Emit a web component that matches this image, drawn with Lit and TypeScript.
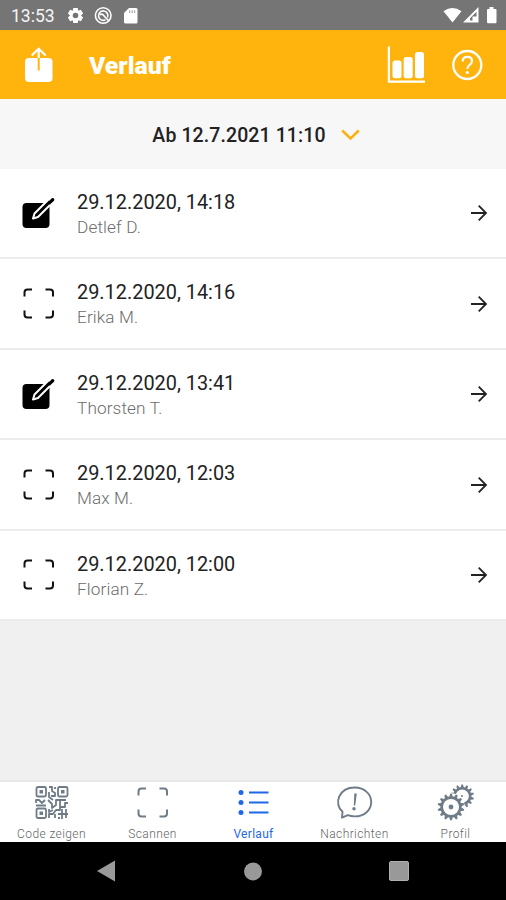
import { LitElement, html, css, svg } from "lit";
import { customElement, property } from "lit/decorators.js";

type Entry = { kind: "edit" | "scan"; date: string; name: string };

const entries: Entry[] = [
  { kind: "edit", date: "29.12.2020, 14:18", name: "Detlef D." },
  { kind: "scan", date: "29.12.2020, 14:16", name: "Erika M." },
  { kind: "edit", date: "29.12.2020, 13:41", name: "Thorsten T." },
  { kind: "scan", date: "29.12.2020, 12:03", name: "Max M." },
  { kind: "scan", date: "29.12.2020, 12:00", name: "Florian Z." },
];

/** Closed outline of a cog wheel with pointed, slightly blunted teeth. */
function cog(cx: number, cy: number, inner: number, outer: number, teeth: number): string {
  const step = (Math.PI * 2) / teeth;
  const pts: string[] = [];
  for (let i = 0; i < teeth; i++) {
    const a = i * step - Math.PI / 2;
    for (const [off, r] of [[-0.36, inner], [-0.14, outer], [0.14, outer], [0.36, inner]]) {
      const t = a + off * step;
      pts.push(`${(cx + r * Math.cos(t)).toFixed(2)} ${(cy + r * Math.sin(t)).toFixed(2)}`);
    }
  }
  return `M${pts.join("L")}Z`;
}

const scanFrame = svg`<path d="M5.500 12.500V8.500Q5.500 5.500 8.500 5.500H13M26.500 5.500H31Q34 5.500 34 8.500V12.500M34 26.500V30.500Q34 33.500 31 33.500H26.500M13 33.500H8.500Q5.500 33.500 5.500 30.500V26.500"
  fill="none" stroke="currentColor" stroke-width="2"/>`;

const icons: Record<string, unknown> = {
  edit: html`<svg width="40" height="40" viewBox="0 0 40 40">
    <rect x="3.500" y="10" width="27" height="25" rx="4" fill="#000"/>
    <path d="M14 25.500L15.500 20.500L30 6L33.500 9.500L19 24Z" fill="#000" stroke="#fff" stroke-width="2" stroke-linejoin="round"/>
    <path d="M29.800 8.200L32.800 5.300Q33.800 4.500 34.900 5.500Q35.900 6.700 35 7.700L32 10.600L30.500 12" fill="#000"/>
  </svg>`,
  scan: html`<svg width="40" height="40" viewBox="0 0 40 40">${scanFrame}</svg>`,
  qr: html`<svg width="40" height="40" viewBox="0 0 40 40">
    <g fill="none" stroke="currentColor" stroke-width="1.800" stroke-linejoin="round">
      <rect x="4.500" y="4" width="9.500" height="9.500" rx="1.500"/><rect x="26" y="4" width="9.500" height="9.500" rx="1.500"/><rect x="4.500" y="25.500" width="9.500" height="9.500" rx="1.500"/>
      <path d="M17 4H20V8L23 10V13H19M17 9V14L21 17M23 4V6M4 20V17H7L10 20L13 17M4 22.500H14M16 17L20 21V25L24 22V17H34M28 17V24H33V20H36M17 26V29L21 27M17 35V31H21L24 27H28V24M23 35V31M26 31H36M30 26V36M34 26V35M26 35H28"/>
    </g>
    <path d="M7.500 7H11V10.500H7.500ZM29 7H32.500V10.500H29ZM7.500 28.500H11V32H7.500Z" fill="currentColor"/>
  </svg>`,
  list: html`<svg width="40" height="40" viewBox="0 0 40 40">
    <g fill="currentColor"><circle cx="7" cy="9.600" r="2.500"/><circle cx="7" cy="19.500" r="2.500"/><circle cx="7" cy="29.400" r="2.500"/></g>
    <path d="M15 9.500H34.500M15 19.500H34.500M15 29.500H34.500" stroke="currentColor" stroke-width="2" fill="none"/>
  </svg>`,
  message: html`<svg width="40" height="40" viewBox="0 0 40 40">
    <path d="M7.500 28.800C-1.500 21 3.500 4.500 19.800 4.500C29.500 4.500 36.200 11.200 36.200 19C36.200 27 29.500 33.400 19.800 33.400Q15.800 33.400 12.800 32.200L7 34.700Z" fill="none" stroke="currentColor" stroke-width="1.900" stroke-linejoin="round"/>
    <path d="M19.300 10.500H21.800L20.200 22.500H18.800Z" fill="currentColor"/><circle cx="19" cy="25.700" r="1.700" fill="currentColor"/>
  </svg>`,
  gears: html`<svg width="40" height="40" viewBox="0 0 40 40">
    <path d="${cog(26.2, 13.2, 9.2, 11.8, 14)}" fill="currentColor"/><circle cx="26.200" cy="13.200" r="6.600" fill="#fff"/>
    <circle cx="15" cy="24" r="13.800" fill="#fff"/>
    <path d="${cog(15, 24, 10.7, 13.4, 14)}" fill="currentColor"/><circle cx="15" cy="24" r="8" fill="#fff"/>
    <circle cx="15" cy="24" r="2.400" fill="currentColor"/><circle cx="26" cy="13" r="1" fill="currentColor"/>
  </svg>`,
};

@customElement("history-row")
class HistoryRow extends LitElement {
  @property({ attribute: false }) entry!: Entry;
  static styles = css`
    :host { display: flex; align-items: center; box-sizing: border-box; height: 90.500px; padding: 1px 17px 0 19px; background: #fff; border-bottom: 2px solid #ececec; color: #111; }
    .kind { display: flex; width: 58px; flex: none; }
    .text { flex: 1; padding-top: 3px; }
    .date { font-size: 19.900px; line-height: 25px; white-space: nowrap; color: #222; }
    .name { font-size: 17.200px; font-weight: 300; line-height: 25px; color: #6c6c6c; letter-spacing: .12px; }
    svg { display: block; }
  `;
  render() {
    return html`
      <div class="kind">${icons[this.entry.kind]}</div>
      <div class="text"><div class="date">${this.entry.date}</div><div class="name">${this.entry.name}</div></div>
      <svg width="20" height="20" viewBox="0 0 20 20"><path d="M2 10H17M9.700 2.700L17 10L9.700 17.300" fill="none" stroke="#222" stroke-width="1.800"/></svg>`;
  }
}

@customElement("tab-item")
class TabItem extends LitElement {
  @property() icon = "";
  @property() label = "";
  static styles = css`
    :host { display: flex; flex-direction: column; align-items: center; flex: 1 1 0; color: #6f7c87; padding-top: 1px; }
    :host([active]) { color: #1f68e5; }
    svg { display: block; }
    .label { font-size: 12px; font-weight: 300; line-height: 16px; margin-top: 3px; color: #666; letter-spacing: .4px; white-space: nowrap; }
    :host([active]) .label { color: #1f68e5; font-weight: 400; letter-spacing: .3px; }
  `;
  render() {
    return html`${icons[this.icon]}<div class="label">${this.label}</div>`;
  }
}

@customElement("app-root")
class AppRoot extends LitElement {
  static styles = css`
    :host { display: flex; flex-direction: column; width: 506px; height: 900px; overflow: hidden; background: #f0f0f0; font-family: Roboto, "Liberation Sans", sans-serif; }
    svg { display: block; flex: none; }
    .status { display: flex; align-items: center; height: 30px; flex: none; box-sizing: border-box; padding: 1px 7px 0 11px; background: #757575; color: #f5f5f5; }
    .clock { font-size: 17.500px; line-height: 28px; width: 56px; }
    .grow { flex: 1; }
    .header { display: flex; align-items: center; height: 69px; flex: none; box-sizing: border-box; padding: 0 22px 0 19px; background: #ffb40d; color: #fff; }
    .title { margin: 3px 0 0 30px; font-size: 24.800px; font-weight: 900; line-height: 32px; flex: 1; }
    .help { margin-left: 24px; }
    .filter { display: flex; align-items: center; justify-content: center; height: 69.500px; flex: none; box-sizing: border-box; padding: 3px 0 0 6px; background: #f7f7f7; color: #222; font-size: 19.500px; font-weight: 500; letter-spacing: .1px; gap: 15px; }
    .list { flex: 1; }
    .tabs { display: flex; height: 62px; flex: none; box-sizing: border-box; padding-left: 1px; background: #fff; border-top: 2px solid #e9e9e9; }
    .system { display: flex; align-items: center; justify-content: space-between; height: 58px; flex: none; box-sizing: border-box; padding: 0 97px; background: #000; }
  `;
  render() {
    return html`
      <div class="status">
        <span class="clock">13:53</span>
        <svg width="76" height="20" viewBox="0 0 76 20">
          <path d="M6.300 1.900H10.700L11.300 4.700L13.900 3.800L16.100 7.500L14 9.500L16.100 11.500L13.900 15.200L11.300 14.300L10.700 17.100H6.300L5.700 14.300L3.100 15.200L.9 11.500L3 9.500L.9 7.500L3.100 3.800L5.700 4.700ZM8.500 6.700A2.800 2.800 0 1 0 8.500 12.300A2.800 2.800 0 1 0 8.500 6.700Z" fill="#fff" fill-rule="evenodd"/>
          <g fill="none" stroke="#fff" stroke-width="1.600"><circle cx="36.200" cy="9.500" r="7.800"/><path d="M38.500 13.700A4.700 4.700 0 1 1 40.500 11.500M33 9C35 7 36.500 9 38 11L42 15"/></g>
          <path d="M62 2H69Q70.500 2 70.500 3.500V16Q70.500 17.500 69 17.500H58.500Q57 17.500 57 16V7Z" fill="#fff"/>
          <path d="M62.700 4.300V7M65.200 4.300V7M67.700 4.300V7" stroke="#9a9a9a" stroke-width="1"/>
        </svg>
        <span class="grow"></span>
        <svg width="57" height="20" viewBox="0 0 57 20">
          <path d="M1.500 5.200Q10.500-1.400 19.500 5.200L10.500 16.500Z" fill="#fff"/>
          <path d="M36.500 1V16.500H21ZM34.500 5.800L28 12.300V14.500H30.500V10.500H34.500Z" fill="#fff" fill-rule="evenodd"/>
          <path d="M47.500 1H51.500V3H53.500Q54.500 3 54.500 4V16Q54.500 17.300 53.300 17.300H46.200Q45 17.300 45 16V4Q45 3 46 3H47.500Z" fill="#fff"/>
        </svg>
      </div>
      <div class="header">
        <svg width="40" height="40" viewBox="0 0 40 40">
          <rect x="6" y="13" width="27.500" height="24" rx="4" fill="#fff"/>
          <path d="M19.700 25.500V13" stroke="#ffb40d" stroke-width="2"/>
          <path d="M19.700 13V4M12.700 10.500L19.700 3.700L26.700 10.500" fill="none" stroke="#fff" stroke-width="2.200"/>
        </svg>
        <div class="title">Verlauf</div>
        <svg width="40" height="40" viewBox="0 0 40 40">
          <path d="M2.900 1.500V36.700H39" fill="none" stroke="#fff" stroke-width="2.200"/>
          <g fill="#fff"><rect x="6.500" y="15.500" width="9" height="17.800" rx="2.500"/><rect x="17.700" y="12" width="9" height="21.300" rx="2.500"/><rect x="29" y="7" width="9" height="26.300" rx="2.500"/></g>
        </svg>
        <svg class="help" width="34" height="34" viewBox="0 0 34 34">
          <circle cx="17.300" cy="17" r="14" fill="none" stroke="#fff" stroke-width="2.300"/>
          <path d="M12.700 13.500Q12.700 8.900 17.300 8.900Q22 8.900 22 13Q22 15.300 19.500 17Q17.300 18.500 17.300 21" fill="none" stroke="#fff" stroke-width="2.100"/><circle cx="17.300" cy="24.500" r="1.600" fill="#fff"/>
        </svg>
      </div>
      <div class="filter">
        <span>Ab 12.7.2021 11:10</span>
        <svg width="19" height="14" viewBox="0 0 19 14"><path d="M1.200 2.500L9.500 10.500L17.800 2.500" fill="none" stroke="#fdb011" stroke-width="2.500"/></svg>
      </div>
      <div class="list">${entries.map((e) => html`<history-row .entry=${e}></history-row>`)}</div>
      <div class="tabs">
        <tab-item icon="qr" label="Code zeigen"></tab-item>
        <tab-item icon="scan" label="Scannen"></tab-item>
        <tab-item icon="list" label="Verlauf" active></tab-item>
        <tab-item icon="message" label="Nachrichten"></tab-item>
        <tab-item icon="gears" label="Profil"></tab-item>
      </div>
      <div class="system">
        <svg width="19" height="22" viewBox="0 0 19 22"><path d="M0 11L18 .5V21.500Z" fill="#999"/></svg>
        <svg width="19" height="19" viewBox="0 0 19 19"><circle cx="10" cy="9.500" r="9" fill="#999"/></svg>
        <svg width="20" height="20" viewBox="0 0 20 20"><rect x=".5" y=".5" width="19" height="19" rx="1.500" fill="#999" stroke="#b0b0b0"/></svg>
      </div>`;
  }
}
